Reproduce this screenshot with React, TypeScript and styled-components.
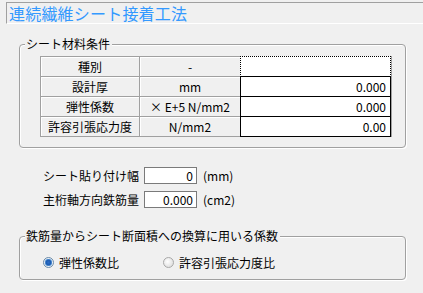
import React from "react";
import styled, { createGlobalStyle } from "styled-components";

const GlobalStyle = createGlobalStyle`
  html, body {
    margin: 0;
    padding: 0;
    background: #f0f0f0;
  }
  body {
    font-family: "Noto Sans CJK JP", "DejaVu Sans", sans-serif;
    font-size: 12px;
    color: #000;
  }
`;

const Page = styled.div`
  width: 423px;
  height: 293px;
  overflow: hidden;
  display: flex;
  flex-direction: column;
`;

const TitleBar = styled.div`
  margin: 2px 0 0 6px;
  height: 20px;
  border-top: 1px solid #a0a0a0;
  border-left: 1px solid #a0a0a0;
  border-bottom: 1px solid #ffffff;
  display: flex;
  align-items: center;
  padding-left: 2px;
  color: #3399ff;
  font-size: 16px;
  line-height: 20px;
  letter-spacing: 0.2px;
`;

const Group = styled.fieldset<{ $top: number; $height: number }>`
  margin: ${(p) => p.$top}px 0 0 19px;
  width: 387px;
  height: ${(p) => p.$height}px;
  box-sizing: border-box;
  padding: 0;
  border: 1px solid #a0a0a0;
  border-radius: 4px;
  box-shadow: inset 1px 1px 0 #ffffff, 1px 1px 0 #ffffff;
`;

const Legend = styled.legend`
  margin-left: 5px;
  padding: 0 2px 0 1px;
  font-size: 12px;
  line-height: 14px;
  background: #f0f0f0;
`;

const Grid = styled.div`
  margin: 5px 0 0 20px;
  width: 351px;
  display: grid;
  grid-template-columns: 98px 100px 150px;
  grid-auto-rows: 19px;
  gap: 1px;
  background: #a0a0a0;
  border: 1px solid #a0a0a0;
  border-right: none;
`;

const HeadCell = styled.div`
  background: #f0f0f0;
  box-shadow: inset 1px 1px 0 #ffffff;
  display: flex;
  align-items: center;
  justify-content: center;
  font-size: 12px;
  white-space: nowrap;
`;

const ValueCell = styled.div<{ $focus?: boolean }>`
  background: #ffffff;
  margin: -1px 0 -1px -1px;
  border: 1px ${(p) => (p.$focus ? "dotted" : "solid")} #000;
  display: flex;
  align-items: center;
  justify-content: flex-end;
  padding-right: 4px;
  font-size: 12px;
`;

const Fields = styled.div`
  margin: 19px 0 0 43px;
  display: flex;
  flex-direction: column;
  gap: 7px;
`;

const FieldRow = styled.div`
  display: flex;
  align-items: center;
  height: 17px;
`;

const FieldLabel = styled.span`
  width: 101px;
  white-space: nowrap;
`;

const NumBox = styled.div`
  width: 53px;
  height: 17px;
  box-sizing: border-box;
  border: 1px solid #7a7a7a;
  background: #ffffff;
  display: flex;
  align-items: center;
  justify-content: flex-end;
  padding-right: 3px;
`;

const Unit = styled.span`
  margin-left: 6px;
`;

const Radios = styled.div`
  display: flex;
  align-items: center;
  margin: 11px 0 0 23px;
`;

const RadioItem = styled.label<{ $width: number }>`
  display: flex;
  align-items: center;
  width: ${(p) => p.$width}px;
  gap: 5px;
`;

const Dot = styled.span<{ $on?: boolean }>`
  width: 11px;
  height: 11px;
  border-radius: 50%;
  box-sizing: border-box;
  border: 1px solid ${(p) => (p.$on ? "#6a8aa8" : "#a8a8a8")};
  background: ${(p) =>
    p.$on
      ? "radial-gradient(circle at 50% 50%, #2a6cc8 0, #1c5cb0 2.5px, #6ea6e0 3.5px, #e8eef4 4px)"
      : "radial-gradient(circle at 40% 40%, #ffffff 0, #e4e4e4 5px)"};
`;

const rows = [
  { name: "種別", unit: "-", value: "", focus: true },
  { name: "設計厚", unit: "mm", value: "0.000" },
  { name: "弾性係数", unit: "× E+5 N/mm2", value: "0.000" },
  { name: "許容引張応力度", unit: "N/mm2", value: "0.00" },
];

function App() {
  return (
    <Page>
      <GlobalStyle />
      <TitleBar>連続繊維シート接着工法</TitleBar>
      <Group $top={13} $height={111}>
        <Legend>シート材料条件</Legend>
        <Grid>
          {rows.map((r) => (
            <React.Fragment key={r.name}>
              <HeadCell>{r.name}</HeadCell>
              <HeadCell>{r.unit}</HeadCell>
              <ValueCell $focus={r.focus}>{r.value}</ValueCell>
            </React.Fragment>
          ))}
        </Grid>
      </Group>
      <Fields>
        <FieldRow>
          <FieldLabel>シート貼り付け幅</FieldLabel>
          <NumBox>0</NumBox>
          <Unit>(mm)</Unit>
        </FieldRow>
        <FieldRow>
          <FieldLabel>主桁軸方向鉄筋量</FieldLabel>
          <NumBox>0.000</NumBox>
          <Unit>(cm2)</Unit>
        </FieldRow>
      </Fields>
      <Group $top={21} $height={51}>
        <Legend>鉄筋量からシート断面積への換算に用いる係数</Legend>
        <Radios>
          <RadioItem $width={120}>
            <Dot $on />
            弾性係数比
          </RadioItem>
          <RadioItem $width={140}>
            <Dot />
            許容引張応力度比
          </RadioItem>
        </Radios>
      </Group>
    </Page>
  );
}

export default App;
